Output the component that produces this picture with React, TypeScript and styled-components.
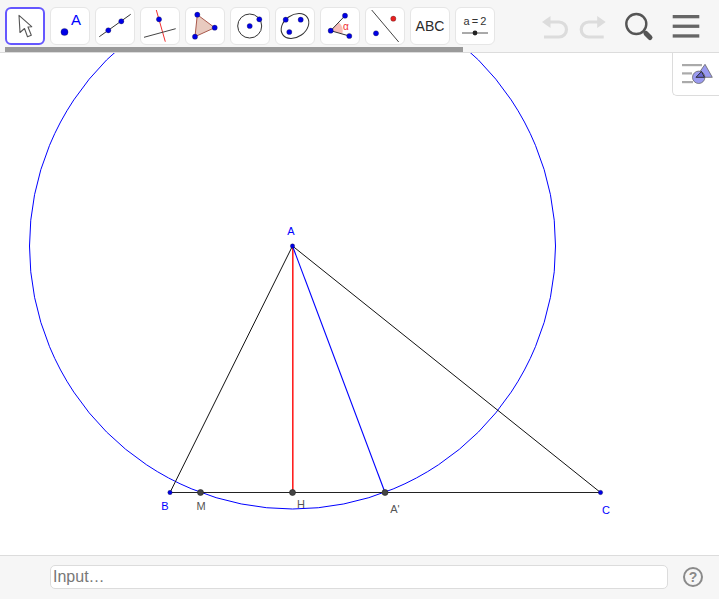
import * as React from 'react'

import styled, { createGlobalStyle } from 'styled-components'

const GlobalStyle = createGlobalStyle`
  html, body {
    margin: 0;
    padding: 0;
    background: #fff;
    font-family: 'Liberation Sans', Arial, sans-serif;
  }
`

const BLUE = '#0000ff'
const DOT = '#0000e6'

const Applet = styled.div`
  width: 719px;
  height: 599px;
  display: flex;
  flex-direction: column;
  overflow: hidden;
`

const Toolbar = styled.header`
  flex: none;
  height: 52px;
  background: #f6f6f6;
  border-bottom: 1px solid #dcdcdc;
  display: flex;
  flex-direction: column;
`

const ToolRow = styled.div`
  height: 38px;
  margin-top: 7px;
  padding-left: 5px;
  display: flex;
  gap: 5px;
`

interface ToolProps {
  active?: boolean
}

const Tool = styled.button<ToolProps>`
  box-sizing: border-box;
  width: 40px;
  height: 38px;
  padding: 0;
  display: flex;
  flex-direction: column;
  align-items: center;
  justify-content: center;
  background: #fff;
  border: ${(p) => (p.active ? '2px solid #6557ff' : '1px solid #e6e6e6')};
  border-radius: 6px;
  color: #2a2a2a;
`

const ToolIcon = styled.svg`
  width: 32px;
  height: 32px;
  flex: none;
  overflow: visible;
`

const ToolLabel = styled.span`
  font-size: 14px;
  line-height: 16px;
`

const SliderLabel = styled.span`
  font-size: 11px;
  line-height: 12px;
  margin-top: -1px;
  word-spacing: -1px;
  color: #333;
`

const SliderIcon = styled.svg`
  width: 28px;
  height: 8px;
  margin-top: 2px;
`

const Actions = styled.div`
  margin-left: 39px;
  display: flex;
  align-items: center;
`

interface ActionProps {
  gap?: number
}

const Action = styled.button<ActionProps>`
  width: 32px;
  height: 32px;
  padding: 0;
  margin-left: ${(p) => p.gap ?? 0}px;
  background: none;
  border: none;
`

const Progress = styled.div`
  height: 5px;
  width: 458px;
  margin: 2px 0 0 5px;
  background: #9a9a9a;
`

const Canvas = styled.main`
  flex: 1;
  min-height: 0;
  position: relative;
  background: #fff;
`

const Drawing = styled.svg`
  display: block;
  width: 100%;
  height: 100%;
`

const StyleToggle = styled.button`
  position: absolute;
  top: 0;
  right: 0;
  box-sizing: border-box;
  width: 47px;
  height: 43px;
  padding: 0;
  background: #fff;
  border: none;
  border-left: 1px solid #dcdcdc;
  border-bottom: 1px solid #dcdcdc;
  border-bottom-left-radius: 5px;
`

const GeoLabel = styled.text<{ tone: string }>`
  font-family: 'Liberation Sans', Arial, sans-serif;
  font-size: 11px;
  fill: ${(p) => p.tone};
  text-anchor: middle;
`

const InputBar = styled.footer`
  flex: none;
  height: 44px;
  box-sizing: border-box;
  background: #f6f6f6;
  border-top: 1px solid #dcdcdc;
  padding: 9px 16px 0 50px;
  display: flex;
  align-items: flex-start;
  gap: 15px;
`

const AlgebraInput = styled.input`
  flex: 1;
  box-sizing: border-box;
  height: 24px;
  padding: 0 2px;
  background: #fff;
  border: 1px solid #dcdcdc;
  border-radius: 5px;
  outline: none;
  font-family: 'Liberation Sans', Arial, sans-serif;
  font-size: 16px;

  &::placeholder {
    color: #777;
    opacity: 1;
  }
`

const Help = styled.div`
  box-sizing: border-box;
  width: 20px;
  height: 20px;
  margin-top: 2px;
  border: 2px solid #8a8a8a;
  border-radius: 50%;
  color: #8a8a8a;
  font-size: 14px;
  font-weight: bold;
  line-height: 16px;
  text-align: center;
`

const Pt: React.FC<{ x: number; y: number; r?: number; fill?: string }> = ({ x, y, r = 2.6, fill = DOT }) => (
  <circle cx={x} cy={y} r={r} fill={fill} stroke="#222" strokeWidth={0.3} />
)

const icons: React.ReactNode[] = [
  <>
    <Pt x={10.5} y={22} r={3.6} />
    <text x={22} y={15} textAnchor="middle" fontFamily="Liberation Sans" fontSize={15} fill={BLUE}>
      A
    </text>
  </>,
  <>
    <line x1={0.3} y1={26.7} x2={31.7} y2={4.3} stroke="#333" />
    <Pt x={9.3} y={20.3} />
    <Pt x={22.3} y={11.3} />
  </>,
  <>
    <line x1={12.3} y1={0} x2={21.3} y2={31.7} stroke="#f03030" />
    <line x1={0} y1={27.3} x2={31.7} y2={18.7} stroke="#444" />
    <Pt x={15} y={9.3} />
  </>,
  <>
    <polygon points="8.3,4.7 25.7,17.7 6,26.7" fill="#e8cabf" stroke="#a9594c" />
    <Pt x={8.3} y={4.7} />
    <Pt x={25.7} y={17.7} />
    <Pt x={6} y={26.7} />
  </>,
  <>
    <circle cx={15.7} cy={16} r={12} fill="none" stroke="#333" />
    <Pt x={15.7} y={16} />
    <Pt x={25.3} y={9.3} />
  </>,
  <>
    <ellipse cx={16} cy={16} rx={15} ry={11} transform="rotate(-35 16 16)" fill="none" stroke="#333" />
    <Pt x={6.7} y={9.7} />
    <Pt x={21.7} y={9.7} />
    <Pt x={10.3} y={22} />
  </>,
  <>
    <path d="M6.7 20.7 L14.8 12.2 A12 12 0 0 1 18.3 23.8 Z" fill="#f6bdb9" />
    <polyline points="21,5.7 6.7,20.7 25.3,26" fill="none" stroke="#333" />
    <Pt x={21} y={5.7} />
    <Pt x={6.7} y={20.7} />
    <Pt x={25.3} y={26} />
    <text x={22} y={19.5} textAnchor="middle" fontFamily="Liberation Sans" fontSize={10} fill="#f03030">
      α
    </text>
  </>,
  <>
    <line x1={2.7} y1={0} x2={29.7} y2={32} stroke="#444" />
    <Pt x={7} y={23.3} />
    <Pt x={24.3} y={8.7} fill="#e82020" />
  </>,
]

const Geometry: React.FC = () => (
  <Drawing viewBox="0 53 719 502" preserveAspectRatio="xMinYMin">
    <circle cx={292.5} cy={246} r={263} fill="none" stroke={BLUE} strokeWidth={1} />
    <line x1={170} y1={492.5} x2={600.5} y2={492.5} stroke="#222" strokeWidth={1} />
    <line x1={292.5} y1={246} x2={170} y2={492.5} stroke="#111" strokeWidth={1} />
    <line x1={292.5} y1={246} x2={600.5} y2={492.5} stroke="#111" strokeWidth={1} />
    <line x1={292.8} y1={246} x2={292.8} y2={492.5} stroke="#ff2020" strokeWidth={1.6} />
    <line x1={292.5} y1={246} x2={385} y2={492.5} stroke={BLUE} strokeWidth={1.1} />
    <circle cx={292.5} cy={246} r={2.2} fill={DOT} stroke="#111" strokeWidth={0.3} />
    <circle cx={170} cy={492.5} r={2.2} fill={DOT} stroke="#111" strokeWidth={0.3} />
    <circle cx={600.5} cy={492.5} r={2.2} fill={DOT} stroke="#111" strokeWidth={0.3} />
    <circle cx={200.5} cy={492.5} r={3} fill="#444" stroke="#222" strokeWidth={0.6} />
    <circle cx={292.5} cy={492.5} r={3} fill="#444" stroke="#222" strokeWidth={0.6} />
    <circle cx={385} cy={492.5} r={3} fill="#444" stroke="#222" strokeWidth={0.6} />
    <GeoLabel tone={BLUE} x={291} y={235}>
      A
    </GeoLabel>
    <GeoLabel tone={BLUE} x={165} y={510}>
      B
    </GeoLabel>
    <GeoLabel tone={BLUE} x={606} y={514}>
      C
    </GeoLabel>
    <GeoLabel tone="#555" x={201} y={510}>
      M
    </GeoLabel>
    <GeoLabel tone="#555" x={301} y={508}>
      H
    </GeoLabel>
    <GeoLabel tone="#555" x={395} y={513}>
      A'
    </GeoLabel>
  </Drawing>
)

export default function App() {
  return (
    <Applet>
      <GlobalStyle />
      <Toolbar>
        <ToolRow>
          <Tool active aria-label="Move">
            <ToolIcon viewBox="0 0 32 32">
              <path
                d="M10 5.3 L11 22.5 L15.5 18.5 L18.5 26.7 L22.3 25.2 L19 17 L22.7 16.7 Z"
                fill="#fff"
                stroke="#555"
                strokeWidth={1.1}
                strokeLinejoin="round"
              />
            </ToolIcon>
          </Tool>
          {icons.map((icon, i) => (
            <Tool key={i}>
              <ToolIcon viewBox="0 0 32 32">{icon}</ToolIcon>
            </Tool>
          ))}
          <Tool>
            <ToolLabel>ABC</ToolLabel>
          </Tool>
          <Tool>
            <SliderLabel>a = 2</SliderLabel>
            <SliderIcon viewBox="0 0 28 8">
              <line x1={1} y1={4} x2={27} y2={4} stroke="#555" />
              <circle cx={14} cy={4} r={2.4} fill="#222" />
            </SliderIcon>
          </Tool>
          <Actions>
            <Action aria-label="Undo">
              <svg width={32} height={32} viewBox="0 0 32 32">
                <path d="M3 12 L11.5 6 L11.5 18 Z" fill="#dcdcdc" />
                <path d="M9 12 H20 A7.5 7.5 0 0 1 20 27 H5" fill="none" stroke="#dcdcdc" strokeWidth={3.2} />
              </svg>
            </Action>
            <Action gap={5} aria-label="Redo">
              <svg width={32} height={32} viewBox="0 0 32 32">
                <path d="M29.7 12 L21.2 6 L21.2 18 Z" fill="#dcdcdc" />
                <path d="M23.7 12 H12.7 A7.5 7.5 0 0 0 12.7 27 H27.7" fill="none" stroke="#dcdcdc" strokeWidth={3.2} />
              </svg>
            </Action>
            <Action gap={15} aria-label="Search">
              <svg width={32} height={32} viewBox="0 0 32 32">
                <circle cx={13.3} cy={14} r={10} fill="none" stroke="#555" strokeWidth={2.4} />
                <line x1={21} y1={21.5} x2={23} y2={23.5} stroke="#555" strokeWidth={2.4} />
                <line x1={23} y1={23.5} x2={27} y2={27.5} stroke="#555" strokeWidth={5} strokeLinecap="round" />
              </svg>
            </Action>
            <Action gap={15} aria-label="Menu">
              <svg width={32} height={32} viewBox="0 0 32 32">
                <rect x={2.7} y={5} width={26.6} height={3.3} fill="#666" />
                <rect x={2.7} y={14.6} width={26.6} height={3.3} fill="#666" />
                <rect x={2.7} y={24.3} width={26.6} height={3.3} fill="#666" />
              </svg>
            </Action>
          </Actions>
        </ToolRow>
        <Progress />
      </Toolbar>
      <Canvas>
        <Geometry />
        <StyleToggle aria-label="Toggle style bar">
          <svg width={46} height={42} viewBox="672 53 46 42">
            <rect x={681} y={64} width={20} height={2.2} fill="#aaa" />
            <rect x={681} y={72.3} width={10} height={2.2} fill="#aaa" />
            <rect x={681} y={81} width={11} height={2.2} fill="#aaa" />
            <polygon points="704,64.3 711.3,77.3 695,77.3" fill="#9a9af0" stroke="#666" strokeWidth={0.8} />
            <circle cx={697.7} cy={77.3} r={6.2} fill="#9a9af0" stroke="#666" strokeWidth={0.8} />
            <path d="M700.5 71.5 L703.5 77.3 L695 77.3 Z" fill="#6a6ad0" stroke="#222" strokeWidth={0.9} />
          </svg>
        </StyleToggle>
      </Canvas>
      <InputBar>
        <AlgebraInput placeholder="Input…" />
        <Help>?</Help>
      </InputBar>
    </Applet>
  )
}
